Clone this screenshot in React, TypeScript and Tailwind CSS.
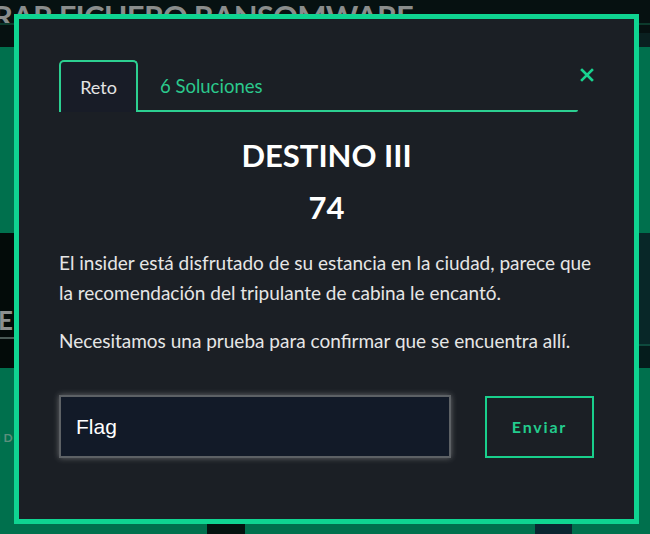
import React from "react";

const sans = "font-['Lato','Noto_Sans',sans-serif]";

function CloseIcon() {
  return (
    <svg width="14" height="14" viewBox="0 0 14 14" aria-hidden="true">
      <path d="M2 2 L12 12 M12 2 L2 12" stroke="#19d28f" strokeWidth="2.6" strokeLinecap="square" />
    </svg>
  );
}

function Background() {
  return (
    <div className={`w-[650px] h-[534px] overflow-hidden bg-[#00704d] flex flex-col ${sans}`}>
      {/* top header band */}
      <div className="h-[47px] bg-[#061111] flex flex-col shrink-0">
        <div className="h-[23px] flex items-end overflow-hidden">
          <span className="ml-[-7px] text-[31px] font-bold leading-[32px] text-[#8a8d8c] tracking-tight whitespace-nowrap translate-y-[9px]">
            RAR FICHERO RANSOMWARE
          </span>
        </div>
        <div className="h-[2px] bg-[#0c3a2c]" />
        <div className="flex-1 flex">
          <div className="flex-1" />
          <div className="w-[12px] flex flex-col">
            <div className="h-[8px]" />
            <div className="flex-1 bg-[#0a2020]" />
          </div>
        </div>
      </div>
      {/* green area with cards */}
      <div className="h-[186px] shrink-0" />
      <div className="h-[135px] flex shrink-0">
        <div className="w-[320px] bg-[#030b09] flex flex-col">
          <div className="h-[70px]" />
          <div className="h-[34px] flex items-center">
            <span className="ml-[-2px] text-[26px] font-bold text-[#8c8f8e] leading-none">E</span>
          </div>
          <div className="h-[2px] bg-[#4a5a55]" />
          <div className="flex-1" />
        </div>
        <div className="flex-1 bg-[#082728] flex flex-col">
          <div className="h-[111px]" />
          <div className="h-[2px] bg-[#0e4a3e]" />
          <div className="flex-1 bg-[#051c1c]" />
        </div>
      </div>
      <div className="h-[140px] flex items-center shrink-0">
        <span className="ml-[-3px] text-[12px] font-bold tracking-[3px] text-[#5c8f7c]">ID</span>
      </div>
      <div className="h-[16px] shrink-0" />
      <div className="flex-1 flex">
        <div className="w-[207px]" />
        <div className="w-[38px] bg-[#04120f]" />
        <div className="w-[290px]" />
        <div className="w-[37px] bg-[#0a2530]" />
      </div>
    </div>
  );
}

function Modal() {
  return (
    <div
      className={`absolute left-[14px] top-[14px] w-[625px] h-[510px] border-[5px] border-[#0fd491] bg-[#1b1f25] ${sans} flex flex-col pt-[41px] px-[40px]`}
    >
      {/* header: tabs + close */}
      <div className="flex items-start">
        <div className="flex-1 flex h-[52px]">
          <div className="w-[79px] h-[52px] border-t-2 border-l-2 border-r-2 border-[#2ccf91] rounded-t-[5px] bg-[#181c27] flex items-center justify-center">
            <span className="text-[18px] text-[#e4e4e4]">Reto</span>
          </div>
          <div className="flex-1 border-b-2 border-[#2ccf91] flex items-center pl-[22px] pt-[4px] rounded-br-[2px]">
            <span className="text-[18.5px] text-[#2bc98d]">6 Soluciones</span>
          </div>
        </div>
        <button className="w-[16px] h-[16px] mt-[7px] flex items-center justify-end">
          <CloseIcon />
        </button>
      </div>

      {/* title */}
      <h2 className="mt-[25px] text-center text-[31px] leading-[36px] font-bold text-white">DESTINO III</h2>
      <div className="mt-[16px] text-center text-[31px] leading-[36px] font-bold text-white">74</div>

      {/* description */}
      <p className="mt-[23px] text-[19px] leading-[30px] text-[#e6e6e6]">
        El insider está disfrutado de su estancia en la ciudad, parece que la recomendación del tripulante de cabina le encantó.
      </p>
      <p className="mt-[18px] text-[19px] leading-[30px] text-[#e6e6e6]">
        Necesitamos una prueba para confirmar que se encuentra allí.
      </p>

      {/* form */}
      <div className="mt-[39px] flex items-center">
        <div className="w-[392px] h-[63px] bg-[#121a28] border-2 border-[#5d6165] shadow-[0_0_6px_rgba(200,200,200,0.45)] flex items-center pl-[15px]">
          <span className="font-['Liberation_Sans',Arial,sans-serif] text-[21px] text-white">Flag</span>
        </div>
        <button className="ml-[34px] w-[109px] h-[62px] border-2 border-[#19cf8c] flex items-center justify-center">
          <span className="text-[16px] font-bold tracking-[1.8px] text-[#23cc8d]">Enviar</span>
        </button>
      </div>
    </div>
  );
}

export default function App() {
  return (
    <div className="relative w-[650px] h-[534px] overflow-hidden">
      <Background />
      <Modal />
    </div>
  );
}
